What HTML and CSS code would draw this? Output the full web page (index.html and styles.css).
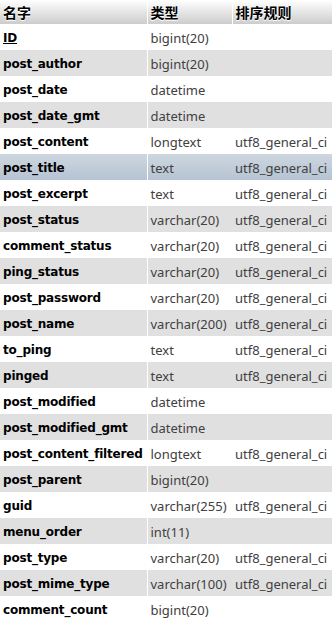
FILE: index.html
```html
<!DOCTYPE html>
<html>
<head>
<meta charset="utf-8">
<link rel="stylesheet" href="styles.css">
</head>
<body>
<table class="grid">
<thead>
<tr><th class="c1">名字</th><th class="c2">类型</th><th class="c3">排序规则</th></tr>
</thead>
<tbody>
<tr><td class="name"><span class="pk">ID</span></td><td class="type">bigint(20)</td><td class="coll"></td></tr>
<tr><td class="name">post_author</td><td class="type">bigint(20)</td><td class="coll"></td></tr>
<tr><td class="name">post_date</td><td class="type">datetime</td><td class="coll"></td></tr>
<tr><td class="name">post_date_gmt</td><td class="type">datetime</td><td class="coll"></td></tr>
<tr><td class="name">post_content</td><td class="type">longtext</td><td class="coll">utf8_general_ci</td></tr>
<tr class="hl"><td class="name">post_title</td><td class="type">text</td><td class="coll">utf8_general_ci</td></tr>
<tr><td class="name">post_excerpt</td><td class="type">text</td><td class="coll">utf8_general_ci</td></tr>
<tr><td class="name">post_status</td><td class="type">varchar(20)</td><td class="coll">utf8_general_ci</td></tr>
<tr><td class="name">comment_status</td><td class="type">varchar(20)</td><td class="coll">utf8_general_ci</td></tr>
<tr><td class="name">ping_status</td><td class="type">varchar(20)</td><td class="coll">utf8_general_ci</td></tr>
<tr><td class="name">post_password</td><td class="type">varchar(20)</td><td class="coll">utf8_general_ci</td></tr>
<tr><td class="name">post_name</td><td class="type">varchar(200)</td><td class="coll">utf8_general_ci</td></tr>
<tr><td class="name">to_ping</td><td class="type">text</td><td class="coll">utf8_general_ci</td></tr>
<tr><td class="name">pinged</td><td class="type">text</td><td class="coll">utf8_general_ci</td></tr>
<tr><td class="name">post_modified</td><td class="type">datetime</td><td class="coll"></td></tr>
<tr><td class="name">post_modified_gmt</td><td class="type">datetime</td><td class="coll"></td></tr>
<tr><td class="name">post_content_filtered</td><td class="type">longtext</td><td class="coll">utf8_general_ci</td></tr>
<tr><td class="name">post_parent</td><td class="type">bigint(20)</td><td class="coll"></td></tr>
<tr><td class="name">guid</td><td class="type">varchar(255)</td><td class="coll">utf8_general_ci</td></tr>
<tr><td class="name">menu_order</td><td class="type">int(11)</td><td class="coll"></td></tr>
<tr><td class="name">post_type</td><td class="type">varchar(20)</td><td class="coll">utf8_general_ci</td></tr>
<tr><td class="name">post_mime_type</td><td class="type">varchar(100)</td><td class="coll">utf8_general_ci</td></tr>
<tr><td class="name">comment_count</td><td class="type">bigint(20)</td><td class="coll"></td></tr>
</tbody>
</table>
</body>
</html>
```
FILE: styles.css
```css
html, body {
  margin: 0;
  padding: 0;
  background: #fff;
}
.grid {
  border-collapse: collapse;
  table-layout: fixed;
  width: 332px;
  font-family: "Noto Sans", "Open Sans", sans-serif;
  font-size: 13px;
  color: #404040;
}
.grid th {
  height: 24px;
  padding: 0 0 0 3px;
  text-align: left;
  vertical-align: middle;
  font-family: "Noto Sans CJK SC", sans-serif;
  font-weight: bold;
  font-size: 14px;
  color: #000;
  text-shadow: 0 0 2px #fff, 0 1px 0 #fff;
  background: linear-gradient(to bottom, #ffffff, #cccccc);
  box-sizing: border-box;
}
.grid .c1 { width: 147px; border-right: 1px solid #fff; }
.grid .c2 { width: 85px; border-right: 1px solid #fff; }
.grid .c3 { width: 100px; }
.grid td {
  height: 26px;
  padding: 1px 0 0 3px;
  box-sizing: border-box;
  white-space: nowrap;
  overflow: hidden;
  vertical-align: middle;
  line-height: 24px;
}
.grid td.name {
  font-family: "DejaVu Sans", sans-serif;
  font-weight: bold;
  font-size: 12px;
  letter-spacing: -0.2px;
  color: #000;
  border-right: 1px solid #fff;
}
.grid tbody tr:nth-child(odd) { background: #fff; }
.grid tbody tr:nth-child(even) { background: #e0e0e0; }
.grid tbody tr.hl { background: linear-gradient(to bottom, #ced7e0, #b5c3d3); }
.pk { text-decoration: underline; }
```
